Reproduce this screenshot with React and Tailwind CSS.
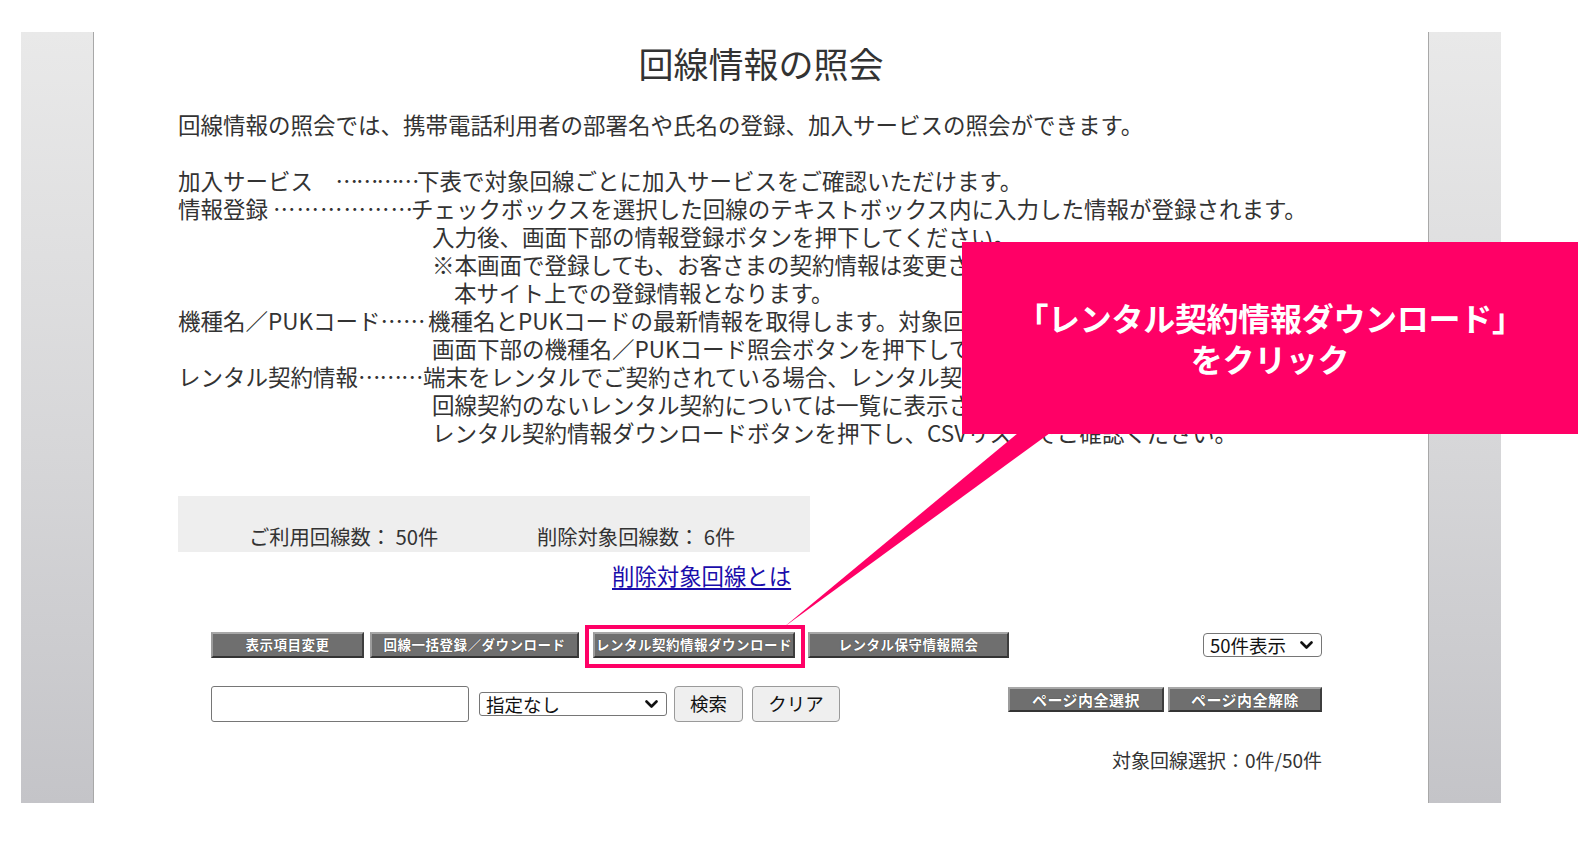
import React from "react";

const dots = (n) => "\u2026".repeat(n);

function BevelBtn({ w, children, size = "text-[13.5px]", h = "h-[26px]" }) {
  return (
    <div
      className={`${w} ${h} shrink-0 flex items-center justify-center bg-[#6f6f6f] border-t-2 border-l-2 border-b-2 border-r-2 border-t-[#a8a8a8] border-l-[#9c9c9c] border-b-[#343434] border-r-[#3e3e3e] text-white font-bold ${size} leading-none tracking-[0.5px] [text-shadow:0_0_1px_#222]`}
    >
      {children}
    </div>
  );
}

function Chevron() {
  return (
    <svg width="13" height="9" viewBox="0 0 13 9" className="shrink-0">
      <path d="M1.5 1.5 L6.5 6.5 L11.5 1.5" fill="none" stroke="#111" strokeWidth="2.6" strokeLinecap="round" strokeLinejoin="round" />
    </svg>
  );
}

function Label({ w, children }) {
  return <span className={`inline-block ${w} whitespace-nowrap align-top`}>{children}</span>;
}

export default function App() {
  return (
    <div className="relative w-[1594px] h-[850px] bg-white overflow-hidden flex font-['Noto_Sans_CJK_JP','Noto_Sans',sans-serif] text-[#333]">
      <div className="w-[21px] shrink-0" />
      <div className="w-[73px] shrink-0 mt-[32px] h-[771px] bg-[linear-gradient(to_bottom,#e9e9e9,#d6d6d8_55%,#c4c4c8)] border-r border-[#a8a8a8]" />

      <div className="w-[1334px] shrink-0 flex flex-col pt-[43px]">
        <h1 className="h-[40px] leading-[40px] text-[35px] text-center font-normal text-[#333]">回線情報の照会</h1>

        <div className="pl-[84px] mt-[27px] text-[22.5px] leading-[28px]">
          <div className="whitespace-nowrap">回線情報の照会では、携帯電話利用者の部署名や氏名の登録、加入サービスの照会ができます。</div>
          <div className="h-[28px]" />
          <div className="whitespace-nowrap">
            <Label w="w-[239px]">加入サービス　<span className="tracking-[-2px]">{dots(4)}</span></Label>
            下表で対象回線ごとに加入サービスをご確認いただけます。
          </div>
          <div className="whitespace-nowrap">
            <Label w="w-[233px]">情報登録 <span className="tracking-[1px]">{dots(6)}</span></Label>
            チェックボックスを選択した回線のテキストボックス内に入力した情報が登録されます。
          </div>
          <div className="ml-[254px] whitespace-nowrap">入力後、画面下部の情報登録ボタンを押下してください。</div>
          <div className="ml-[254px] whitespace-nowrap">※本画面で登録しても、お客さまの契約情報は変更されません。</div>
          <div className="ml-[276px] whitespace-nowrap">本サイト上での登録情報となります。</div>
          <div className="whitespace-nowrap">
            <Label w="w-[250px]">機種名／PUKコード<span>{dots(2)}</span></Label>
            機種名とPUKコードの最新情報を取得します。対象回線を選択し、
          </div>
          <div className="ml-[254px] whitespace-nowrap">画面下部の機種名／PUKコード照会ボタンを押下してください。</div>
          <div className="whitespace-nowrap">
            <Label w="w-[245px]">レンタル契約情報<span className="tracking-[-1px]">{dots(3)}</span></Label>
            端末をレンタルでご契約されている場合、レンタル契約情報を確認できます。
          </div>
          <div className="ml-[254px] whitespace-nowrap">回線契約のないレンタル契約については一覧に表示されません。</div>
          <div className="ml-[254px] whitespace-nowrap">レンタル契約情報ダウンロードボタンを押下し、CSVリストでご確認ください。</div>
        </div>

        <div className="ml-[84px] mt-[50px] w-[632px] h-[56px] bg-[#eeeeee] pt-[28px] text-[20.3px] leading-[24px] flex">
          <span className="ml-[71px] w-[288px]">ご利用回線数： 50件</span>
          <span>削除対象回線数： 6件</span>
        </div>

        <div className="ml-[518px] mt-[9px] h-[28px] leading-[28px] text-[22.4px]">
          <a className="text-[#1a0dab] underline underline-offset-[3px]">削除対象回線とは</a>
        </div>

        <div className="mt-[43px] pl-[117px] pr-[106px] flex items-center h-[26px]">
          <BevelBtn w="w-[153px]">表示項目変更</BevelBtn>
          <div className="ml-[6px]">
            <BevelBtn w="w-[209px]">回線一括登録／ダウンロード</BevelBtn>
          </div>
          <div className="relative ml-[14px]">
            <BevelBtn w="w-[202px]">レンタル契約情報ダウンロード</BevelBtn>
            <div className="absolute -left-[8px] -right-[10px] -top-[7px] -bottom-[10px] border-4 border-[#ff0066]" />
          </div>
          <div className="ml-[13px]">
            <BevelBtn w="w-[201px]">レンタル保守情報照会</BevelBtn>
          </div>
          <div className="ml-auto w-[119px] h-[24px] border border-[#767676] rounded-[4px] bg-white flex items-center justify-between pl-[6px] pr-[8px] text-[18.5px] leading-none text-[#111]">
            <span>50件表示</span>
            <Chevron />
          </div>
        </div>

        <div className="mt-[28px] pl-[117px] pr-[106px] flex items-start h-[36px]">
          <div className="w-[258px] h-[36px] border border-[#767676] rounded-[3px] bg-white shrink-0" />
          <div className="ml-[10px] mt-[6px] w-[188px] h-[24px] border border-[#767676] rounded-[3px] bg-white flex items-center justify-between pl-[6px] pr-[8px] text-[18.5px] leading-none text-[#111] shrink-0">
            <span>指定なし</span>
            <Chevron />
          </div>
          <div className="ml-[7px] w-[69px] h-[36px] border border-[#9a9a9a] rounded-[4px] bg-[#efefef] flex items-center justify-center text-[18.5px] text-[#111] shrink-0">検索</div>
          <div className="ml-[9px] w-[88px] h-[36px] border border-[#9a9a9a] rounded-[4px] bg-[#efefef] flex items-center justify-center text-[18.5px] text-[#111] shrink-0">クリア</div>
          <div className="ml-auto mt-[1px] flex">
            <BevelBtn w="w-[156px]" h="h-[25px]" size="text-[15px]">ページ内全選択</BevelBtn>
            <div className="ml-[4px]">
              <BevelBtn w="w-[154px]" h="h-[25px]" size="text-[15px]">ページ内全解除</BevelBtn>
            </div>
          </div>
        </div>

        <div className="mt-[26px] pr-[106px] text-right text-[19px] leading-[24px] text-[#333]">対象回線選択：0件/50件</div>
      </div>

      <div className="w-[73px] shrink-0 mt-[32px] h-[771px] bg-[linear-gradient(to_bottom,#e9e9e9,#d6d6d8_55%,#c4c4c8)] border-l border-[#a8a8a8]" />

      <svg className="absolute left-0 top-0 pointer-events-none" width="1594" height="850" viewBox="0 0 1594 850">
        <polygon points="1018,433 1050,433 784,627" fill="#ff0066" />
      </svg>

      <div className="absolute left-[962px] top-[242px] w-[616px] h-[192px] bg-[#ff0066] flex flex-col items-center justify-center text-white font-bold text-[32px] leading-[41px] tracking-[-0.3px]">
        <div>「レンタル契約情報ダウンロード」</div>
        <div>をクリック</div>
      </div>
    </div>
  );
}
